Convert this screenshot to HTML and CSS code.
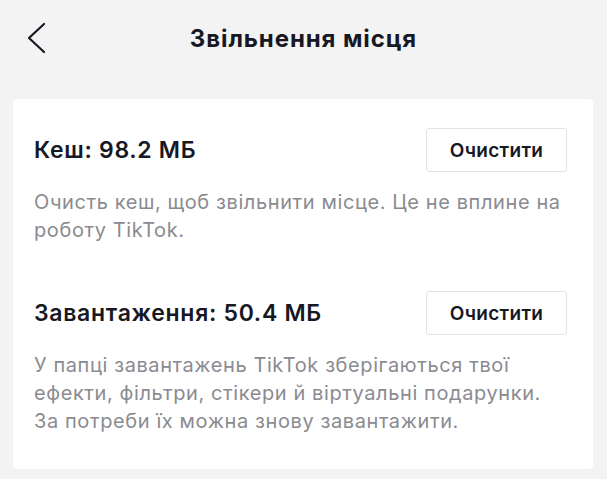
FILE: index.html
```html
<!DOCTYPE html>
<html lang="uk">
<head>
<meta charset="utf-8">
<title>Звільнення місця</title>
<link rel="stylesheet" href="styles.css">
</head>
<body>
<header class="topbar">
  <button class="back" aria-label="Назад">
    <svg width="20" height="32" viewBox="0 0 20 32"><path d="M17 2 L2 16 L17 30" fill="none" stroke="#161823" stroke-width="2.2" stroke-linecap="round" stroke-linejoin="round"/></svg>
  </button>
  <h1 class="title">Звільнення місця</h1>
</header>
<main class="content">
  <section class="card">
    <div class="item">
      <div class="row">
        <h2 class="label">Кеш: 98.2 МБ</h2>
        <button class="clear">Очистити</button>
      </div>
      <p class="desc">Очисть кеш, щоб звільнити місце. Це не вплине на роботу TikTok.</p>
    </div>
    <div class="item">
      <div class="row">
        <h2 class="label">Завантаження: 50.4 МБ</h2>
        <button class="clear">Очистити</button>
      </div>
      <p class="desc">У папці завантажень TikTok зберігаються твої ефекти, фільтри, стікери й віртуальні подарунки. За потреби їх можна знову завантажити.</p>
    </div>
  </section>
</main>
</body>
</html>
```
FILE: styles.css
```css
* { box-sizing: border-box; }
html, body {
  margin: 0;
  background: #f3f3f3;
  font-family: "Inter", "Noto Sans", sans-serif;
  color: #161823;
}
.topbar {
  position: relative;
  height: 76px;
  display: flex;
  align-items: center;
  justify-content: center;
}
.back {
  position: absolute;
  left: 27px;
  top: 22px;
  padding: 0;
  border: 0;
  background: none;
  display: flex;
}
.title {
  margin: 0;
  font-size: 24px;
  font-weight: 700;
  letter-spacing: 0.9px;
}
.content {
  padding: 23px 14px 0 13px;
}
.card {
  background: #fff;
  border-radius: 4px;
  padding: 29px 26px 34px 21px;
  display: flex;
  flex-direction: column;
  gap: 47px;
}
.row {
  display: flex;
  align-items: center;
  justify-content: space-between;
}
.label {
  margin: 0;
  font-size: 23px;
  font-weight: 600;
  letter-spacing: 0.7px;
}
.clear {
  width: 141px;
  height: 44px;
  border: 1px solid #e3e3e4;
  border-radius: 3px;
  background: #fff;
  font-family: inherit;
  font-size: 19px;
  font-weight: 600;
  letter-spacing: 0.3px;
  color: #161823;
  padding: 0;
}
.desc {
  margin: 16px 0 0;
  font-size: 20px;
  line-height: 28px;
  letter-spacing: 0.6px;
  color: #8a8b91;
}
```
